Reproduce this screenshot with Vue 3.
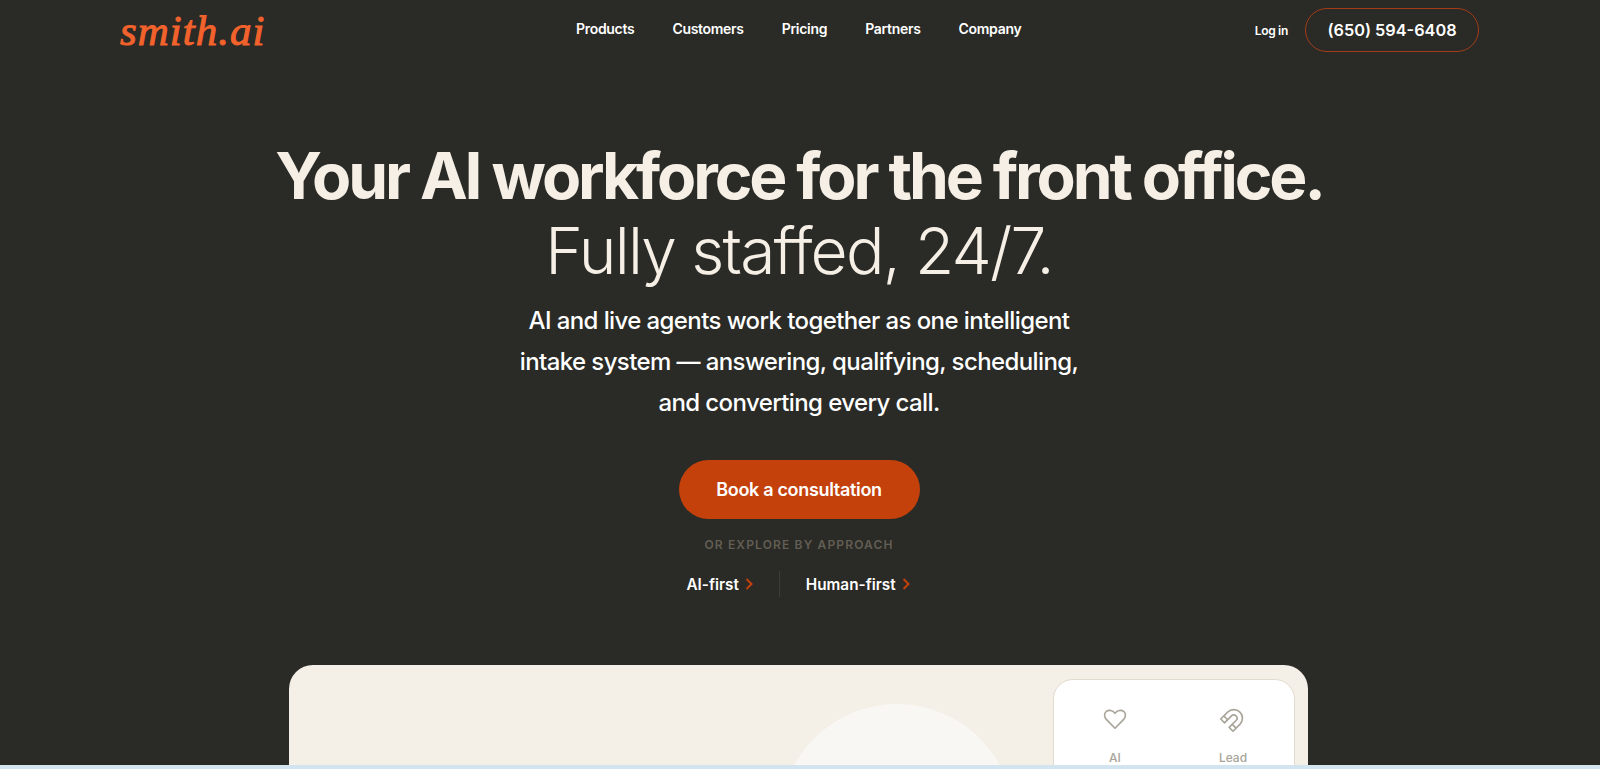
<template>
  <div class="page">
    <div class="site">
      <header class="topbar">
        <a class="logo">smith.ai</a>
        <nav class="nav">
          <a v-for="item in navItems" :key="item">{{ item }}</a>
        </nav>
        <div class="actions">
          <a class="login">Log in</a>
          <a class="phone">(650) 594-6408</a>
        </div>
      </header>

      <section class="hero">
        <h1 class="title">
          <strong>Your AI workforce for the front office.</strong>
          <span>Fully staffed, 24/7.</span>
        </h1>
        <p class="lead">
          AI and live agents work together as one intelligent<br />
          intake system — answering, qualifying, scheduling,<br />
          and converting every call.
        </p>
        <button class="cta">Book a consultation</button>
        <div class="explore">OR EXPLORE BY APPROACH</div>
        <div class="approaches">
          <a>AI-first
            <svg width="8" height="12" viewBox="0 0 8 12" fill="none">
              <path d="M1.5 1l5 5-5 5" stroke="#c4410c" stroke-width="2" />
            </svg>
          </a>
          <i class="sep"></i>
          <a>Human-first
            <svg width="8" height="12" viewBox="0 0 8 12" fill="none">
              <path d="M1.5 1l5 5-5 5" stroke="#c4410c" stroke-width="2" />
            </svg>
          </a>
        </div>
      </section>

      <section class="demo">
        <div class="circle"></div>
        <aside class="panel">
          <div class="tab">
            <svg width="26" height="26" viewBox="0 0 24 24" fill="none" stroke="#a8a499" stroke-width="1.5" stroke-linejoin="round">
              <path d="M12 20.500l-8-8.200C1.800 10 1.900 6.700 4 5c2.200-1.700 5.800-1.300 8 1.800C14.200 3.700 17.800 3.300 20 5c2.100 1.700 2.200 5 0 7.300z" />
            </svg>
            <span>AI</span>
          </div>
          <div class="tab">
            <svg width="26" height="26" viewBox="0 0 24 24" fill="none" stroke="#a8a499" stroke-width="1.5" stroke-linejoin="round">
              <g transform="rotate(45 12 12)">
                <path d="M4 20V11a8 8 0 0 1 16 0v9h-5v-9a3 3 0 0 0-6 0v9z" />
                <path d="M4 16h5M15 16h5" />
              </g>
            </svg>
            <span>Lead</span>
          </div>
        </aside>
      </section>
    </div>
    <div class="strip"></div>
  </div>
</template>

<script setup>
const navItems = ["Products", "Customers", "Pricing", "Partners", "Company"];
</script>

<style>
html,
body {
  margin: 0;
  overflow: hidden;
}
</style>

<style scoped>
.page {
  height: 100vh;
  display: flex;
  flex-direction: column;
  font-family: Inter, "Liberation Sans", sans-serif;
}

.site {
  flex: 1;
  min-height: 0;
  overflow: hidden;
  background: #2a2a26;
  color: #f5efe6;
}

.strip {
  height: 4px;
  background: #d3e4f1;
}

.topbar {
  height: 60px;
  padding: 0 121px 0 120px;
  display: flex;
  align-items: center;
  position: relative;
}

.logo {
  font-family: "Liberation Serif", serif;
  font-style: italic;
  font-size: 43px;
  line-height: 1;
  letter-spacing: 1px;
  color: #f2622c;
  -webkit-text-stroke: 1px #f2622c;
}

.nav {
  position: absolute;
  left: 576px;
  top: 20px;
  display: flex;
  gap: 38px;
  font-size: 14px;
  line-height: 18px;
  font-weight: 600;
  letter-spacing: -0.3px;
  color: #fff;
}

.actions {
  margin-left: auto;
  display: flex;
  align-items: center;
  gap: 17px;
  color: #fff;
}

.login {
  font-size: 12px;
  font-weight: 600;
  letter-spacing: -0.3px;
}

.phone {
  width: 174px;
  height: 44px;
  box-sizing: border-box;
  border: 1px solid #a53c18;
  border-radius: 22px;
  display: flex;
  align-items: center;
  justify-content: center;
  font-size: 16.300px;
  font-weight: 600;
}

.hero {
  display: flex;
  flex-direction: column;
  align-items: center;
  text-align: center;
  padding-right: 2px;
}

.title {
  margin: 79px 0 0;
  font-size: 64px;
  line-height: 76px;
  letter-spacing: -1.8px;
  font-weight: 300;
}

.title strong,
.title span {
  display: block;
}

.title strong {
  font-weight: 700;
  letter-spacing: -3.1px;
  line-height: 74px;
}

.lead {
  margin: 11px 0 0;
  font-size: 24px;
  line-height: 41px;
  font-weight: 500;
  letter-spacing: -0.6px;
  color: #fff;
}

.cta {
  margin-top: 37px;
  width: 241px;
  height: 59px;
  border: 0;
  border-radius: 30px;
  background: #c4410c;
  color: #fff;
  font: 600 18px Inter, "Liberation Sans", sans-serif;
  letter-spacing: -0.32px;
}

.explore {
  margin-top: 18px;
  font-size: 12px;
  line-height: 16px;
  font-weight: 600;
  letter-spacing: 1.15px;
  color: #635e54;
}

.approaches {
  margin-top: 18px;
  margin-right: 2px;
  display: flex;
  align-items: center;
  font-size: 15.300px;
  font-weight: 600;
  color: #fff;
}

.approaches a {
  display: flex;
  align-items: center;
  gap: 6px;
}

.sep {
  width: 1px;
  height: 26px;
  background: #3d3d38;
  margin: 0 26px;
}

.demo {
  margin: 68px 292px 0 289px;
  height: 140px;
  background: #f4efe7;
  border-radius: 24px 24px 0 0;
  position: relative;
  overflow: hidden;
  display: flex;
  justify-content: flex-end;
  padding: 14px 13px 0 0;
}

.circle {
  position: absolute;
  left: 491px;
  top: 39px;
  width: 234px;
  height: 234px;
  border-radius: 50%;
  background: #f9f7f3;
}

.panel {
  width: 242px;
  height: 200px;
  box-sizing: border-box;
  padding: 0 2px;
  background: #fff;
  border: 1px solid #e2dacd;
  border-radius: 20px;
  display: flex;
  position: relative;
}

.tab {
  flex: 1;
  display: flex;
  flex-direction: column;
  align-items: center;
  padding-top: 26px;
  font-size: 12px;
  font-weight: 500;
  color: #a8a499;
}

.tab span {
  margin-top: 18px;
}
</style>
